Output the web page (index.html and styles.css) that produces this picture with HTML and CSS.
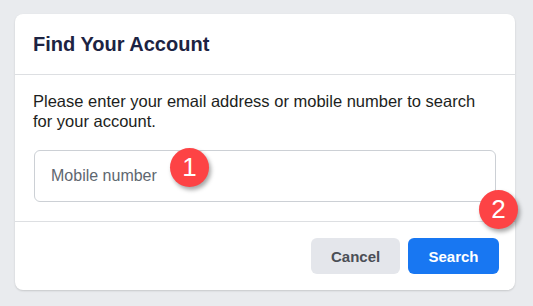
FILE: index.html
```html
<!DOCTYPE html>
<html>
<head>
<meta charset="utf-8">
<link rel="stylesheet" href="styles.css">
</head>
<body>
<div class="page">
  <div class="card">
    <div class="card-header">
      <h2 class="title">Find Your Account</h2>
    </div>
    <div class="card-body">
      <p class="desc">Please enter your email address or mobile number to search for your account.</p>
      <div class="field">
        <input class="input" type="text" placeholder="Mobile number">
        <span class="badge badge-one">1</span>
      </div>
    </div>
    <div class="card-footer">
      <span class="badge badge-two">2</span>
      <button class="btn btn-cancel">Cancel</button>
      <button class="btn btn-search">Search</button>
    </div>
  </div>
</div>
</body>
</html>
```
FILE: styles.css
```css
html, body {
  margin: 0;
  padding: 0;
}
body {
  background: #e9ebee;
  font-family: "Liberation Sans", Arial, sans-serif;
  width: 533px;
  height: 306px;
  overflow: hidden;
}
.page {
  padding: 14px 18px 16px 15px;
}
.card {
  width: 500px;
  background: #fff;
  border-radius: 8px;
  box-shadow: 0 1px 2px rgba(0,0,0,0.15);
  display: flex;
  flex-direction: column;
}
.card-header {
  padding: 18px 18px 18px;
  border-bottom: 1px solid #dddfe2;
}
.title {
  margin: 0;
  font-size: 20px;
  line-height: 24px;
  font-weight: bold;
  color: #1c2342;
}
.card-body {
  padding: 16px 18px 19px;
  border-bottom: 1px solid #dddfe2;
}
.desc {
  margin: 0;
  font-size: 16.5px;
  line-height: 20px;
  color: #1c1e21;
}
.field {
  position: relative;
  margin: 19px 1px 0;
}
.input {
  display: block;
  box-sizing: border-box;
  width: 100%;
  height: 52px;
  border: 1px solid #ccd0d5;
  border-radius: 6px;
  padding: 0 16px;
  font-family: "Liberation Sans", Arial, sans-serif;
  font-size: 16px;
  color: #1c1e21;
  outline: none;
}
.input::placeholder {
  color: #606770;
}
.card-footer {
  position: relative;
  display: flex;
  justify-content: flex-end;
  gap: 8px;
  padding: 16px;
}
.btn {
  height: 36px;
  border: none;
  border-radius: 6px;
  font-family: "Liberation Sans", Arial, sans-serif;
  font-size: 15px;
  font-weight: bold;
  padding: 0 20px;
  cursor: pointer;
}
.btn-cancel {
  background: #e4e6eb;
  color: #4b4f56;
  width: 89px;
}
.btn-search {
  background: #1877f2;
  color: #fff;
  width: 91px;
}
.badge {
  position: absolute;
  width: 39px;
  height: 39px;
  border-radius: 50%;
  background: #fd4345;
  color: #fff;
  font-family: "Liberation Sans", Arial, sans-serif;
  font-size: 26px;
  line-height: 39px;
  text-align: center;
  box-shadow: 2px 3px 4px rgba(0,0,0,0.35);
}
.badge-one {
  left: 136px;
  top: -2px;
}
.badge-two {
  right: -3px;
  top: -32px;
}
```
